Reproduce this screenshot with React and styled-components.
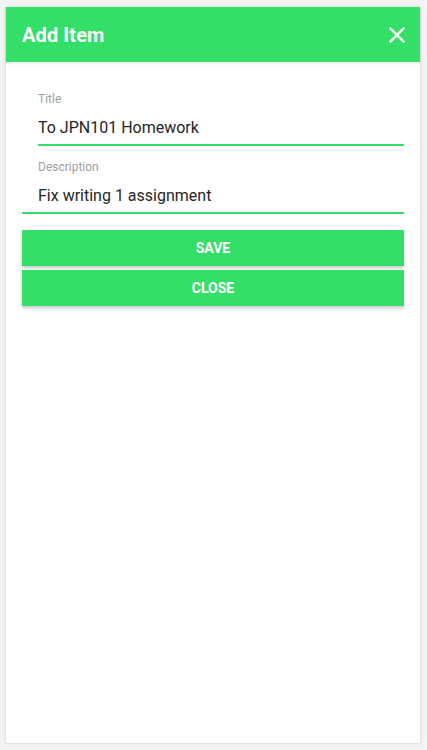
import React from "react";
import styled, { createGlobalStyle } from "styled-components";

const GREEN = "#34df67";

const Global = createGlobalStyle`
  html, body {
    margin: 0;
    padding: 0;
    background: #f4f4f4;
    font-family: Roboto, "Liberation Sans", sans-serif;
  }
`;

const Page = styled.div`
  padding: 7px 6px 6px 5px;
  height: 750px;
  box-sizing: border-box;
`;

const Card = styled.section`
  height: 100%;
  box-sizing: border-box;
  background: #fff;
  border: 1px solid #e2e2e2;
  border-top: none;
  box-shadow: 0 0 6px rgba(0, 0, 0, 0.06);
  display: flex;
  flex-direction: column;
`;

const Header = styled.header`
  height: 55px;
  background: ${GREEN};
  display: flex;
  align-items: center;
  justify-content: space-between;
  padding: 0 15px 0 16px;
  box-shadow: 0 1px 3px rgba(0, 0, 0, 0.12);
`;

const Heading = styled.h1`
  margin: 0;
  color: #fff;
  font-size: 20px;
  font-weight: 700;
  letter-spacing: 0.1px;
`;

const CloseIcon = styled.button`
  border: none;
  background: none;
  padding: 0;
  width: 16px;
  height: 16px;
  display: flex;
  cursor: pointer;
`;

const Form = styled.form`
  padding: 30px 16px 0 16px;
  display: flex;
  flex-direction: column;
`;

const Field = styled.label`
  display: flex;
  flex-direction: column;
  padding-left: ${(p) => (p.$indentLine ? "16px" : "0")};
  margin-bottom: ${(p) => p.$gap || "0"};
`;

const Label = styled.span`
  font-size: 12px;
  color: #9e9e9e;
  padding-left: ${(p) => (p.$indentLine ? "0" : "16px")};
  line-height: 14px;
`;

const Input = styled.input`
  border: none;
  border-bottom: 2px solid ${GREEN};
  outline: none;
  font-family: inherit;
  font-size: 16px;
  color: #262626;
  padding: 12px 0 7px ${(p) => (p.$indentLine ? "0" : "16px")};
  margin: 0;
  line-height: 19px;
  background: transparent;
`;

const Button = styled.button`
  height: 36px;
  border: none;
  background: ${GREEN};
  color: #fff;
  font-family: inherit;
  font-weight: 700;
  font-size: 14px;
  text-transform: uppercase;
  box-shadow: 0 2px 3px rgba(0, 0, 0, 0.22);
  margin-bottom: 4px;
  cursor: pointer;
`;

export default function App() {
  return (
    <>
      <Global />
      <Page>
        <Card>
          <Header>
            <Heading>Add Item</Heading>
            <CloseIcon aria-label="close">
              <svg width="16" height="16" viewBox="0 0 16 16">
                <path
                  d="M1.5 1.5L14.5 14.5M14.5 1.5L1.5 14.5"
                  stroke="#fff"
                  strokeWidth="2.4"
                  strokeLinecap="square"
                />
              </svg>
            </CloseIcon>
          </Header>
          <Form onSubmit={(e) => e.preventDefault()}>
            <Field $indentLine $gap="14px">
              <Label $indentLine>Title</Label>
              <Input $indentLine defaultValue="To JPN101 Homework" />
            </Field>
            <Field $gap="16px">
              <Label>Description</Label>
              <Input defaultValue="Fix writing 1 assignment" />
            </Field>
            <Button type="submit">Save</Button>
            <Button type="button">Close</Button>
          </Form>
        </Card>
      </Page>
    </>
  );
}
